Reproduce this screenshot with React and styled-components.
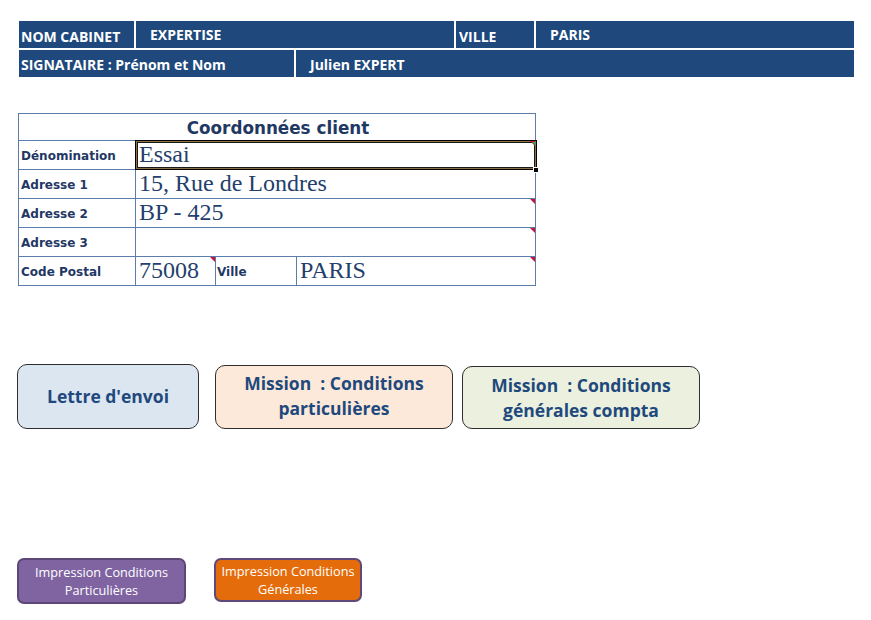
import React from "react";
import styled, { createGlobalStyle } from "styled-components";

const GlobalStyle = createGlobalStyle`
  html, body { margin: 0; padding: 0; background: #ffffff; }
  * { box-sizing: border-box; }
`;

const Page = styled.div`
  padding: 21px 0 0 17px;
  width: 871px;
  height: 620px;
  font-family: "Open Sans", "Lato", sans-serif;
`;

const Header = styled.div`
  display: flex;
  flex-direction: column;
  gap: 2px;
  width: 835px;
  margin-left: 2px;
`;

const HRow = styled.div`
  display: flex;
  gap: 2px;
`;

const HCell = styled.div`
  width: ${(p) => p.$w}px;
  height: 27px;
  background: #1f497d;
  color: #ffffff;
  font-family: "Open Sans", "Lato", sans-serif;
  font-weight: 700;
  font-size: 14px;
  line-height: 27px;
  padding-left: ${(p) => p.$pl}px;
  padding-top: ${(p) => p.$dy || 0}px;
  white-space: nowrap;
  overflow: hidden;
`;

const Grid = styled.div`
  margin-top: 36px;
  margin-left: 1px;
  display: grid;
  grid-template-columns: 117px 80px 81px 239px;
  grid-template-rows: 27px repeat(5, 29px);
  width: 518px;
  border-left: 1px solid #5b7dab;
  border-top: 1px solid #5b7dab;
`;

const Cell = styled.div`
  position: relative;
  border-right: 1px solid #5b7dab;
  border-bottom: 1px solid #5b7dab;
  grid-column: ${(p) => p.$span || "auto"};
  display: flex;
  white-space: nowrap;

  ${(p) =>
    p.$note &&
    `
    &::after {
      content: "";
      position: absolute;
      top: 0;
      right: 0;
      width: 0;
      height: 0;
      border-top: 5px solid #c8143c;
      border-left: 5px solid transparent;
    }
  `}
`;

const Title = styled(Cell)`
  justify-content: center;
  align-items: center;
  font-family: "DejaVu Sans", Verdana, sans-serif;
  font-weight: 700;
  font-size: 16.8px;
  color: #1f3864;
  padding-top: 1px;
  padding-left: 2px;
`;

const Label = styled(Cell)`
  align-items: center;
  padding-left: ${(p) => p.$pl || 2}px;
  padding-top: 2px;
  font-family: "DejaVu Sans", Verdana, sans-serif;
  font-weight: 700;
  font-size: 12px;
  color: #1f3864;
`;

const Value = styled(Cell)`
  align-items: flex-end;
  padding-left: 3px;
  padding-bottom: 3px;
  font-family: "Liberation Serif", "Times New Roman", serif;
  font-size: 24px;
  line-height: 1;
  color: #243f6c;
`;

const Selected = styled(Value)`
  &::before {
    content: "";
    position: absolute;
    left: -1px;
    top: -1px;
    right: -2px;
    bottom: -1px;
    border: 1px solid #000;
    box-shadow: inset 0 0 0 1px #8f6f45, inset 0 0 0 2px #1a1a1a;
    pointer-events: none;
  }
`;

const Handle = styled.span`
  position: absolute;
  right: -4px;
  bottom: -4px;
  width: 6px;
  height: 6px;
  background: #000;
  border: 1px solid #ffffff;
  z-index: 2;
`;

const GreenMark = styled.span`
  position: absolute;
  top: 1px;
  right: -1px;
  width: 0;
  height: 0;
  border-top: 4px solid #3aa655;
  border-left: 4px solid transparent;
  z-index: 2;
`;

const ButtonRow = styled.div`
  display: flex;
  align-items: ${(p) => p.$align || "flex-end"};
  margin-top: ${(p) => p.$mt}px;
`;

const BigButton = styled.div`
  width: ${(p) => p.$w}px;
  height: ${(p) => p.$h}px;
  margin-left: ${(p) => p.$ml || 0}px;
  background: ${(p) => p.$bg};
  border: 1px solid #2e2e2e;
  border-radius: 10px;
  display: flex;
  align-items: center;
  justify-content: center;
  text-align: center;
  font-family: "Open Sans", "Lato", sans-serif;
  font-weight: 700;
  font-size: 17.5px;
  line-height: 25px;
  color: #1f497d;
  padding-bottom: ${(p) => p.$pb || 0}px;
`;

const SmallButton = styled.div`
  width: ${(p) => p.$w}px;
  height: ${(p) => p.$h}px;
  margin-left: ${(p) => p.$ml || 0}px;
  background: ${(p) => p.$bg};
  border: 2.5px solid ${(p) => p.$bd};
  border-radius: 7px;
  display: flex;
  align-items: center;
  justify-content: center;
  text-align: center;
  font-family: "Open Sans", "Lato", sans-serif;
  font-size: 12.7px;
  line-height: 18px;
  color: #ffffff;
  white-space: nowrap;
`;

export default function App() {
  return (
    <>
      <GlobalStyle />
      <Page>
        <Header>
          <HRow>
            <HCell $w={115} $pl={2} $dy={2}>NOM CABINET</HCell>
            <HCell $w={318} $pl={14}>EXPERTISE</HCell>
            <HCell $w={78} $pl={3} $dy={2}>VILLE</HCell>
            <HCell $w={318} $pl={14}>PARIS</HCell>
          </HRow>
          <HRow>
            <HCell $w={275} $pl={2} $dy={1}>SIGNATAIRE : Prénom et Nom</HCell>
            <HCell $w={558} $pl={14} $dy={1}>Julien EXPERT</HCell>
          </HRow>
        </Header>

        <Grid>
          <Title $span="1 / span 4">Coordonnées client</Title>

          <Label>Dénomination</Label>
          <Selected $span="2 / span 3" $note>
            Essai
            <GreenMark />
            <Handle />
          </Selected>

          <Label>Adresse 1</Label>
          <Value $span="2 / span 3">15, Rue de Londres</Value>

          <Label>Adresse 2</Label>
          <Value $span="2 / span 3" $note>BP - 425</Value>

          <Label>Adresse 3</Label>
          <Value $span="2 / span 3" $note></Value>

          <Label>Code Postal</Label>
          <Value $note>75008</Value>
          <Label $pl={1}>Ville</Label>
          <Value $note>PARIS</Value>
        </Grid>

        <ButtonRow $mt={78}>
          <BigButton $w={182} $h={65} $bg="#dce6f1">Lettre d'envoi</BigButton>
          <BigButton $w={238} $h={64} $ml={16} $bg="#fde9d9" $pb={2}>
            Mission&nbsp;&nbsp;: Conditions
            <br />
            particulières
          </BigButton>
          <BigButton $w={238} $h={63} $ml={9} $bg="#ebf1de">
            Mission&nbsp;&nbsp;: Conditions
            <br />
            générales compta
          </BigButton>
        </ButtonRow>

        <ButtonRow $mt={129} $align="flex-start">
          <SmallButton $w={169} $h={46} $bg="#8064a2" $bd="#5c4776">
            Impression Conditions
            <br />
            Particulières
          </SmallButton>
          <SmallButton $w={148} $h={44} $ml={28} $bg="#e46c0a" $bd="#5f497a">
            Impression Conditions
            <br />
            Générales
          </SmallButton>
        </ButtonRow>
      </Page>
    </>
  );
}
